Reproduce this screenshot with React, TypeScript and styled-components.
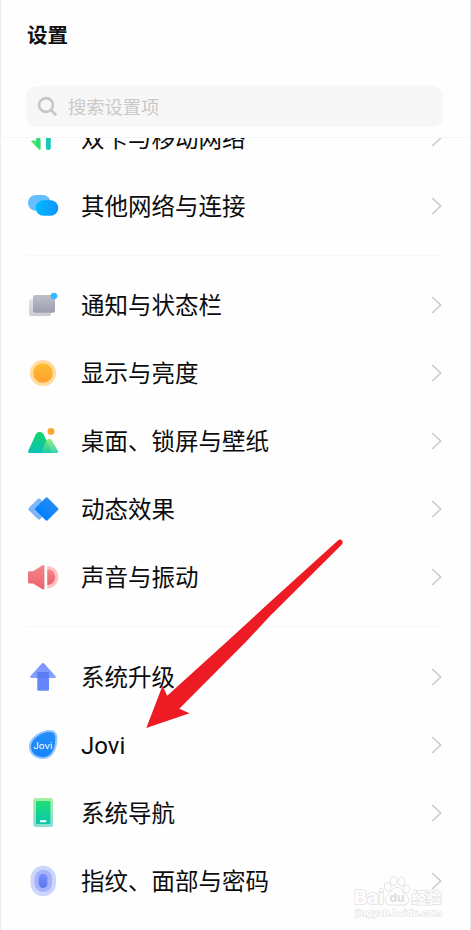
import React from "react";
import styled, { createGlobalStyle } from "styled-components";

const GlobalStyle = createGlobalStyle`
  * { box-sizing: border-box; }
  body {
    margin: 0;
    background: #fefefe;
    font-family: "Noto Sans CJK SC", "Noto Sans", sans-serif;
  }
`;

const Screen = styled.main`
  position: relative;
  width: 471px;
  height: 930px;
  overflow: hidden;
  background: #fefefe;
  border-left: 1px solid #ececec;
  border-right: 1px solid #ececec;
`;

const Header = styled.header`
  position: relative;
  z-index: 1;
  display: flex;
  flex-direction: column;
  height: 138px;
  padding: 19px 27px 0 25px;
  background: #fefefe;
  border-bottom: 1px solid #f6f6f6;
`;

const Title = styled.h1`
  margin: 0 0 0 1px;
  height: 30px;
  line-height: 30px;
  font-size: 20.5px;
  font-weight: 700;
  color: #111;
`;

const SearchBox = styled.div`
  display: flex;
  align-items: center;
  gap: 10px;
  height: 41px;
  margin-top: 37px;
  padding-left: 11px;
  border-radius: 10px;
  background: #f7f7f7;
  color: #c9c9c9;
  font-size: 18.3px;
  line-height: 41px;
`;

const List = styled.div`
  margin-top: -34px;
  padding: 0 27px 0 25px;
`;

const Group = styled.section``;

const Divider = styled.hr<{ $below: number }>`
  height: 1px;
  margin: 15px 0 ${(p) => p.$below}px;
  border: 0;
  background: #f7f7f7;
`;

const Row = styled.div`
  display: flex;
  align-items: center;
  height: 68px;
`;

const Icon = styled.svg`
  flex: none;
  width: 34px;
  height: 34px;
  overflow: visible;
`;

const Label = styled.span`
  flex: 1;
  margin-left: 21px;
  padding-bottom: 2px;
  font-size: 23.5px;
  line-height: 34px;
  color: #0c0c0c;
  white-space: nowrap;
`;

const LatinLabel = styled(Label)`
  font-family: Roboto, "Noto Sans", sans-serif;
  font-size: 24px;
  padding: 2px 0 0;
`;

const ChevronIcon = styled.svg`
  flex: none;
  width: 12px;
  height: 20px;
`;

const PointerArrow = styled.svg`
  position: absolute;
  left: 144px;
  top: 536px;
  width: 200px;
  height: 196px;
`;

const Watermark = styled.svg`
  position: absolute;
  left: 349px;
  top: 870px;
  width: 100px;
  height: 52px;
`;

const Grad = ({ id, from, to, flat }: { id: string; from: string; to: string; flat?: boolean }) => (
  <linearGradient id={id} x1="0" y1="0" x2={flat ? "1" : "0"} y2={flat ? "0" : "1"}>
    <stop offset="0" stopColor={from} />
    <stop offset="1" stopColor={to} />
  </linearGradient>
);

const icons: Record<string, React.ReactNode> = {
  sim: (
    <>
      <Grad id="simA" from="#19c9b0" to="#16c9c2" />
      <path d="M5.2 20.6Q5 20 6.500 19.500H14.400v9.300q-.6.4-1.200-.1z" fill="#4be866" />
      <path d="M10.200 6H14.400V28L10.200 25z" fill="#2ddb78" />
      <rect x="20" y="5" width="4.800" height="24" rx="2" fill="url(#simA)" />
    </>
  ),
  link: (
    <>
      <Grad id="linkA" from="#00b9ff" to="#0d94ff" flat />
      <rect x="2" y="6" width="22.6" height="15.8" rx="7.9" fill="#64bfff" />
      <rect x="9.7" y="11.3" width="22.6" height="15.5" rx="7.75" fill="url(#linkA)" />
    </>
  ),
  notice: (
    <>
      <Grad id="noticeA" from="#bfc0cc" to="#9c9dad" />
      <Grad id="noticeB" from="#e3e3e9" to="#c9cad5" />
      <rect x="3" y="11" width="22" height="17" rx="2.5" fill="url(#noticeB)" />
      <rect x="7" y="7" width="22" height="17.7" rx="2.5" fill="url(#noticeA)" />
      <circle cx="28" cy="8" r="3.3" fill="#37baff" />
    </>
  ),
  display: (
    <>
      <Grad id="sunA" from="#ffbd2e" to="#ffa033" />
      <circle cx="17" cy="17" r="13.1" fill="#ffdc9e" />
      <circle cx="17" cy="17" r="9.8" fill="url(#sunA)" />
    </>
  ),
  desktop: (
    <>
      <Grad id="hillA" from="#18d36c" to="#08c3b5" />
      <Grad id="hillB" from="#88ed70" to="#20ceaa" />
      <path d="M2.300 26.800L9.800 10.200q1.200-2.500 3.800-2.500t4 2.500L26.300 29H3.200q-1.700 0-.9-2.200z" fill="url(#hillA)" />
      <path d="M15.400 29L20 16.900q1-2.200 3-2.200t3.200 2.200l5.900 10.300q.8 1.800-.9 1.800z" fill="url(#hillB)" opacity=".88" />
      <circle cx="25" cy="7.400" r="3.400" fill="#ffa62b" />
    </>
  ),
  motion: (
    <>
      <Grad id="motionA" from="#258cf8" to="#007eff" />
      <rect x="5" y="9" width="16" height="16" rx="1.800" transform="rotate(45 13 17)" fill="#7db4fa" />
      <rect x="12" y="8.300" width="17.400" height="17.400" rx="1.800" transform="rotate(45 20.700 17)" fill="url(#motionA)" />
    </>
  ),
  sound: (
    <>
      <Grad id="soundA" from="#f5868c" to="#ea626c" />
      <path d="M21.300 6A11.100 11.100 0 0 1 21.300 28.200z" fill="#ffc2c5" />
      <path d="M21.300 9.200A7.900 7.900 0 0 1 21.300 25z" fill="url(#soundA)" />
      <path d="M3.200 11.300H7L16.200 5.400q2.200-1 2.200 1.100V28q0 2.100-2.200 1.100L7 23.500H3.200q-1.200 0-1.200-1.200v-9.800q0-1.200 1.200-1.200z" fill="url(#soundA)" />
    </>
  ),
  upgrade: (
    <>
      <Grad id="upA" from="#7892fb" to="#86a1ff" />
      <path d="M15.400 3.900q1.600-1.700 3.200 0L29.600 16.300q1 1.700-.9 1.700H5.300q-1.900 0-.9-1.700z" fill="url(#upA)" />
      <path d="M11.300 18H23v11.200q0 1.500-1.500 1.500h-8.700q-1.500 0-1.500-1.500z" fill="#6686fb" />
      <rect x="11.300" y="12" width="11.700" height="6" fill="#5d7bf3" />
    </>
  ),
  jovi: (
    <>
      <Grad id="joviA" from="#258df8" to="#1684fc" />
      <path d="M3 18.500C3 10 14 2 24 2c5 0 7.300 3 7.300 8 0 11-4.300 21-14.300 21C8.500 31 3 26 3 18.500z" fill="#93c4fb" />
      <path d="M5 18.500C5 11.500 14.800 4 23.600 4c4 0 5.700 2.300 5.700 6.200C29.300 20 25.500 29 17 29 9.500 29 5 24.700 5 18.500z" fill="url(#joviA)" />
      <text x="7.300" y="21" textLength="19" lengthAdjust="spacingAndGlyphs" fontFamily="Inter, sans-serif" fontSize="8.600" fontWeight="400" fill="#fff">Jovi</text>
    </>
  ),
  nav: (
    <>
      <Grad id="navA" from="#20df75" to="#08c5b0" />
      <Grad id="navB" from="#a5efa3" to="#86dfd5" />
      <rect x="7.300" y="2" width="19.700" height="29" rx="2.500" fill="url(#navB)" />
      <rect x="10" y="5" width="14.400" height="23" rx="1.200" fill="url(#navA)" />
      <rect x="14" y="24.200" width="6.300" height="2" fill="#fff" />
    </>
  ),
  finger: (
    <>
      <Grad id="fingerA" from="#768eff" to="#5b78ef" />
      <rect x="4.600" y="1.700" width="25.400" height="30.400" rx="12.700" fill="#ccd5fd" />
      <rect x="8.600" y="5.700" width="17.500" height="22.400" rx="8.750" fill="#a5b4fa" />
      <rect x="12.700" y="9.700" width="8.700" height="14.200" rx="4.350" fill="url(#fingerA)" />
    </>
  ),
};

const groups: [string, string][][] = [
  [["sim", "双卡与移动网络"], ["link", "其他网络与连接"]],
  [
    ["notice", "通知与状态栏"],
    ["display", "显示与亮度"],
    ["desktop", "桌面、锁屏与壁纸"],
    ["motion", "动态效果"],
    ["sound", "声音与振动"],
  ],
  [
    ["upgrade", "系统升级"],
    ["jovi", "Jovi"],
    ["nav", "系统导航"],
    ["finger", "指纹、面部与密码"],
  ],
];

export default function App() {
  return (
    <>
      <GlobalStyle />
      <Screen>
        <Header>
          <Title>设置</Title>
          <SearchBox>
            <svg width="21" height="21" viewBox="0 0 21 21" fill="none" stroke="#c6c6c6" strokeWidth="2.600" strokeLinecap="round">
              <circle cx="9" cy="9" r="6.900" />
              <path d="M14.200 14.300l4.300 4.200" />
            </svg>
            <span>搜索设置项</span>
          </SearchBox>
        </Header>
        <List>
          {groups.map((items, i) => (
            <Group key={i}>
              {i > 0 && <Divider $below={i === 1 ? 15 : 16} />}
              {items.map(([icon, label]) => {
                const Text = icon === "jovi" ? LatinLabel : Label;
                return (
                  <Row key={icon}>
                    <Icon viewBox="0 0 34 34">{icons[icon]}</Icon>
                    <Text>{label}</Text>
                    <ChevronIcon viewBox="0 0 12 20" fill="none" stroke="#cacaca" strokeWidth="1.600">
                      <path d="M1.300 2L9.700 10l-8.400 8" />
                    </ChevronIcon>
                  </Row>
                );
              })}
            </Group>
          ))}
        </List>
        <PointerArrow viewBox="145 536 200 196">
          <path
            d="M146.300 728L162.500 685.700 167.200 695.700 228.700 640 270 602 338.200 540.300Q340.500 538.600 342.200 540.700 343.300 542.900 341.600 544.800L270 616 246 641.700 179.300 708.700 189.600 713.300Z"
            fill="#ed1c24"
          />
        </PointerArrow>
        <Watermark viewBox="350 870 100 52" fill="#fefefe" stroke="#e3e3e3">
          <g fontFamily="Inter, sans-serif" fontWeight="700" strokeWidth="1.600" paintOrder="stroke">
            <text x="354" y="903.500" fontSize="19" textLength="30" lengthAdjust="spacingAndGlyphs">Bai</text>
            <text x="411.500" y="903" fontSize="15" textLength="30" fontFamily="Noto Sans CJK SC">经验</text>
            <text x="355" y="916" fontSize="9" strokeWidth="1.200" textLength="87" lengthAdjust="spacingAndGlyphs">jingyan.baidu.com</text>
          </g>
          <g strokeWidth="1">
            <ellipse cx="387.700" cy="887" rx="3.200" ry="4.200" transform="rotate(-15 387.700 887)" />
            <ellipse cx="393.600" cy="881" rx="3.300" ry="4.500" />
            <ellipse cx="401.500" cy="881.500" rx="3.200" ry="4.500" transform="rotate(10 401.500 881.500)" />
            <ellipse cx="406.500" cy="889" rx="3.300" ry="4" transform="rotate(20 406.500 889)" />
            <path d="M397 887.500c4 0 5.500 4 8.500 7 5.500 4.500 3.500 10.500-2.500 10.500-3 0-9 .3-12 0-6.500 0-8-6.500-2.500-10.500 3-3 4.500-7 8.500-7z" />
          </g>
          <text x="389.500" y="901.800" fontFamily="Inter, sans-serif" fontSize="12" fontWeight="700" fill="#dcdcdc" stroke="none" textLength="15" lengthAdjust="spacingAndGlyphs">du</text>
        </Watermark>
      </Screen>
    </>
  );
}
